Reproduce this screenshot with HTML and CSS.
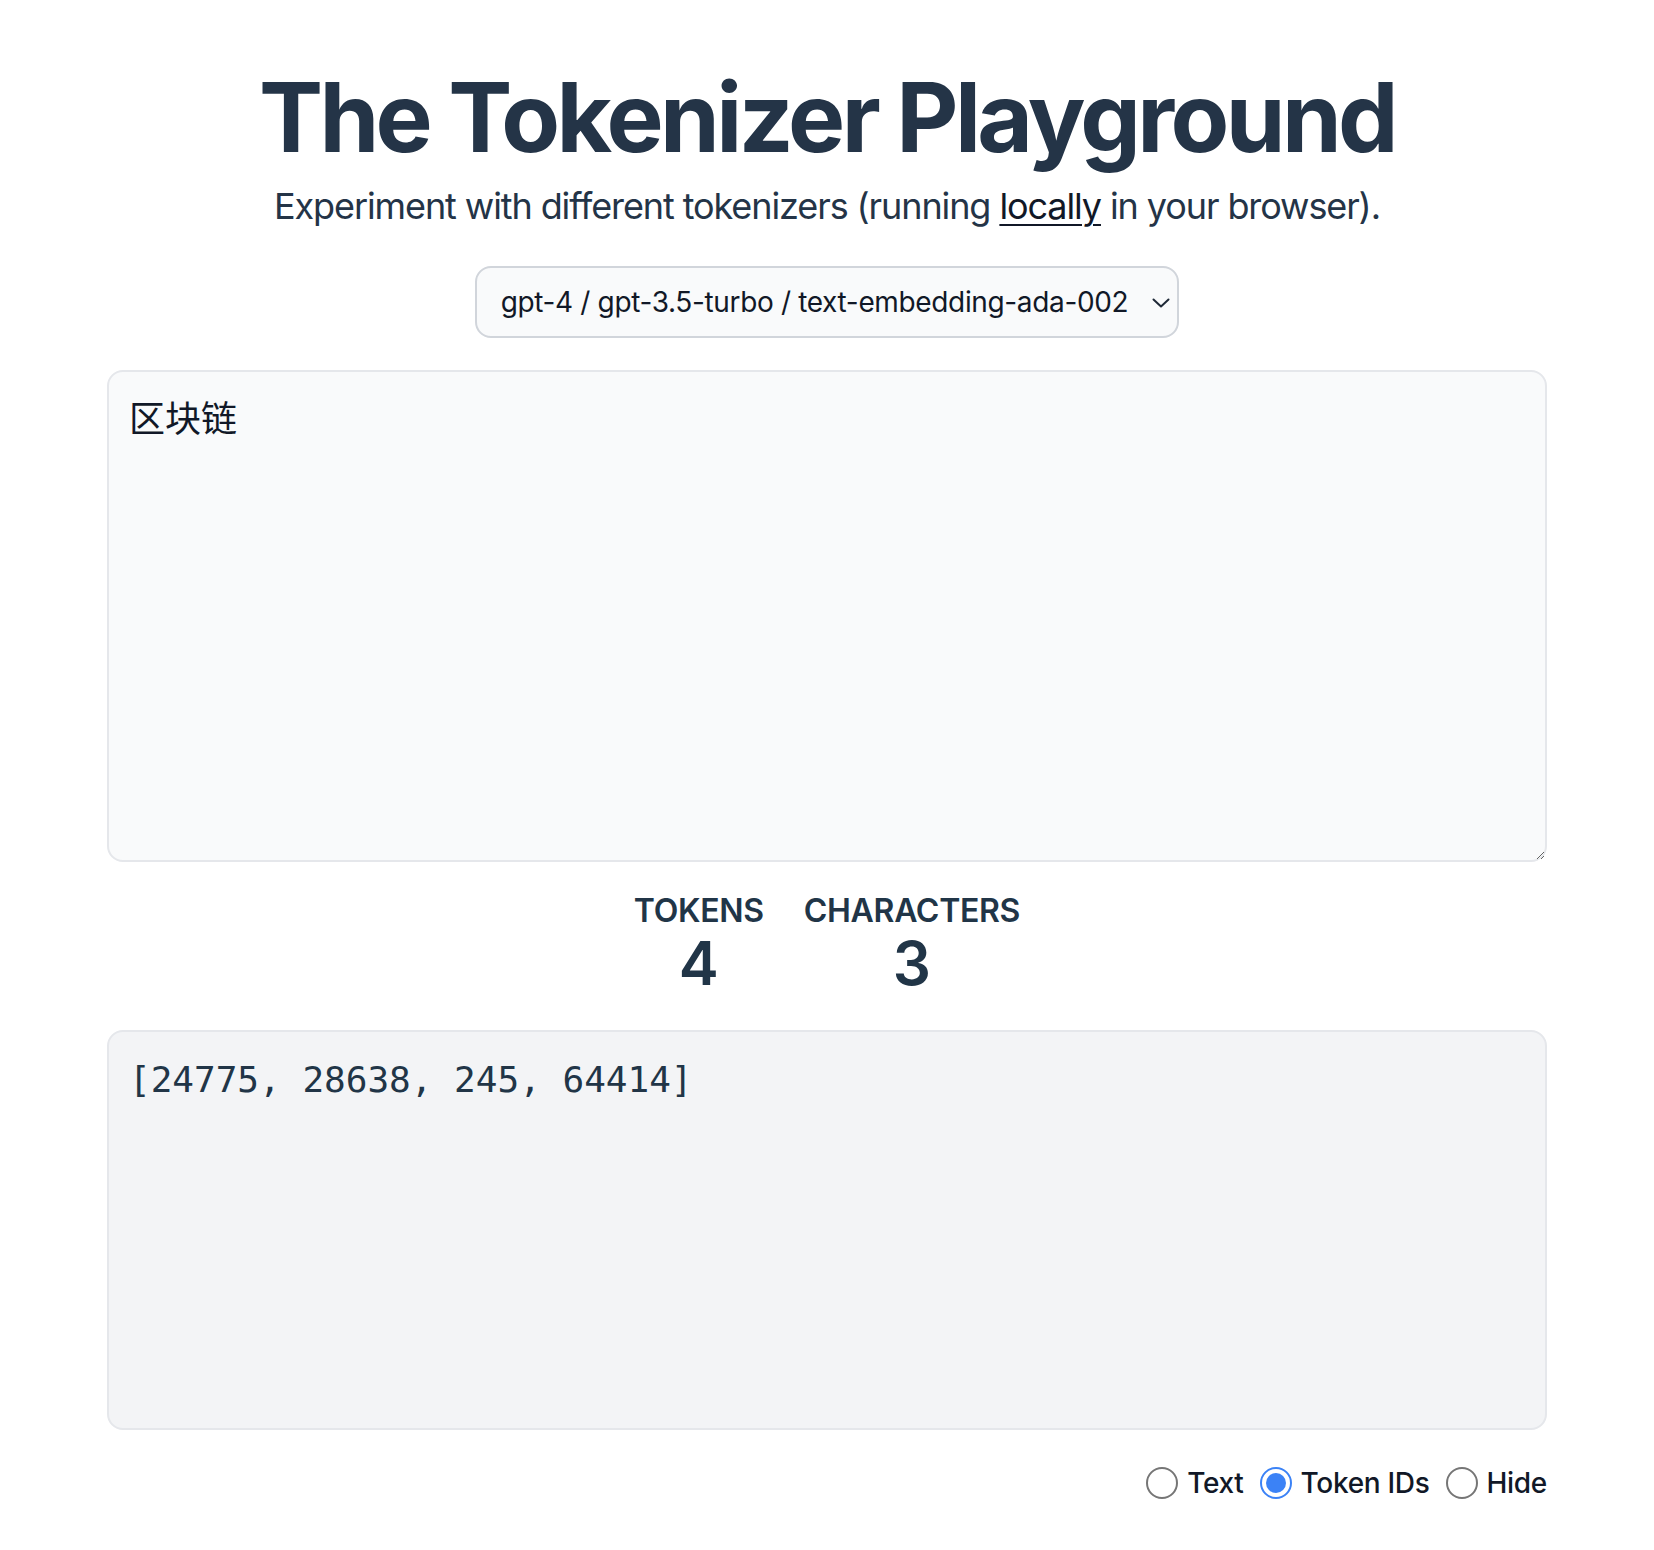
FILE: index.html
```html
<!DOCTYPE html>
<html lang="en">
<head>
<meta charset="utf-8">
<title>The Tokenizer Playground</title>
<link rel="stylesheet" href="styles.css">
</head>
<body>
<div class="app">
  <div class="header">
    <h1 class="title">The Tokenizer Playground</h1>
    <h2 class="subtitle">Experiment with different tokenizers (running <a class="link" href="#">locally</a> in your browser).</h2>
  </div>

  <div class="select">
    <span class="select-text">gpt-4 / gpt-3.5-turbo / text-embedding-ada-002</span>
    <svg class="chevron" width="18" height="10" viewBox="0 0 18 10" aria-hidden="true"><path d="M1.5 1.5 L9 8.5 L16.5 1.5" fill="none" stroke="#1f2937" stroke-width="2" stroke-linecap="round" stroke-linejoin="round"/></svg>
  </div>

  <textarea class="input" rows="8" placeholder="Enter some text">区块链</textarea>

  <div class="stats">
    <div class="stat">
      <h2 class="stat-label">Tokens</h2>
      <h3 class="stat-value">4</h3>
    </div>
    <div class="stat">
      <h2 class="stat-label">Characters</h2>
      <h3 class="stat-value">3</h3>
    </div>
  </div>

  <div class="output">[24775, 28638, 245, 64414]</div>

  <div class="radios">
    <label class="radio-item"><span class="radio"></span><span class="radio-label">Text</span></label>
    <label class="radio-item"><span class="radio checked"></span><span class="radio-label">Token IDs</span></label>
    <label class="radio-item"><span class="radio"></span><span class="radio-label">Hide</span></label>
  </div>
</div>
</body>
</html>
```
FILE: styles.css
```css
html, body {
  margin: 0;
  padding: 0;
  background: #ffffff;
}

body {
  font-family: Inter, "Noto Sans", sans-serif;
  color: #213547;
  line-height: 1.5;
}

.app {
  width: 1440px;
  margin: 0 auto;
  padding-top: 66px;
  display: flex;
  flex-direction: column;
  align-items: center;
  gap: 32px;
  text-align: center;
}

.header {
  display: flex;
  flex-direction: column;
  align-items: center;
}

.title {
  margin: 0 0 13px;
  padding-top: 3px;
  font-size: 96px;
  line-height: 96px;
  font-weight: 700;
  letter-spacing: -3.6px;
  color: #243447;
}

.subtitle {
  margin: 0;
  font-size: 36px;
  line-height: 56px;
  font-weight: 400;
  letter-spacing: -1.1px;
  color: #243447;
}

.link {
  color: #111827;
  text-decoration: underline;
  text-decoration-thickness: 2px;
  text-underline-offset: 5px;
}

.select {
  display: flex;
  align-items: center;
  box-sizing: border-box;
  height: 72px;
  padding: 0 7px 0 24px;
  background: #f9fafb;
  border: 2px solid #d1d5db;
  border-radius: 16px;
  font-size: 28px;
  letter-spacing: -0.35px;
  color: #111827;
}

.select-text {
  line-height: 40px;
}

.chevron {
  margin-left: 24px;
  margin-top: 2px;
  display: block;
}

.input {
  display: block;
  width: 100%;
  height: 492px;
  box-sizing: border-box;
  padding: 20px;
  margin: 0;
  background: #f9fafb;
  border: 2px solid #e5e7eb;
  border-radius: 16px;
  font-family: "DejaVu Sans Mono", "Noto Sans CJK SC", monospace;
  font-size: 36px;
  line-height: 56px;
  color: #111827;
  outline: none;
}

.stats {
  display: flex;
  justify-content: center;
  gap: 40px;
  padding-top: 1px;
  margin-bottom: -1px;
}

.stat {
  display: flex;
  flex-direction: column;
}

.stat-label {
  margin: 0;
  font-size: 32px;
  line-height: 32px;
  font-weight: 600;
  letter-spacing: -0.3px;
  text-transform: uppercase;
}

.stat-value {
  margin: 0;
  font-size: 60px;
  line-height: 72px;
  font-weight: 600;
}

.output {
  width: 100%;
  height: 400px;
  box-sizing: border-box;
  padding: 20px;
  background: #f3f4f6;
  border: 2px solid #e5e7eb;
  border-radius: 16px;
  font-family: "DejaVu Sans Mono", monospace;
  font-size: 36px;
  line-height: 56px;
  text-align: left;
  white-space: pre-wrap;
}

.radios {
  align-self: flex-end;
  display: flex;
  align-items: center;
  gap: 16px;
  height: 40px;
  margin-top: 1px;
}

.radio-item {
  display: flex;
  align-items: center;
}

.radio {
  box-sizing: border-box;
  width: 32px;
  height: 32px;
  border-radius: 50%;
  border: 2px solid #767676;
  background: #ffffff;
  position: relative;
}

.radio.checked {
  border-color: #3b82f6;
}

.radio.checked::after {
  content: "";
  position: absolute;
  left: 4px;
  top: 4px;
  width: 20px;
  height: 20px;
  border-radius: 50%;
  background: #3b82f6;
}

.radio-label {
  margin-left: 9px;
  font-size: 28px;
  line-height: 40px;
  font-weight: 500;
  letter-spacing: -0.3px;
  color: #111827;
}
```
